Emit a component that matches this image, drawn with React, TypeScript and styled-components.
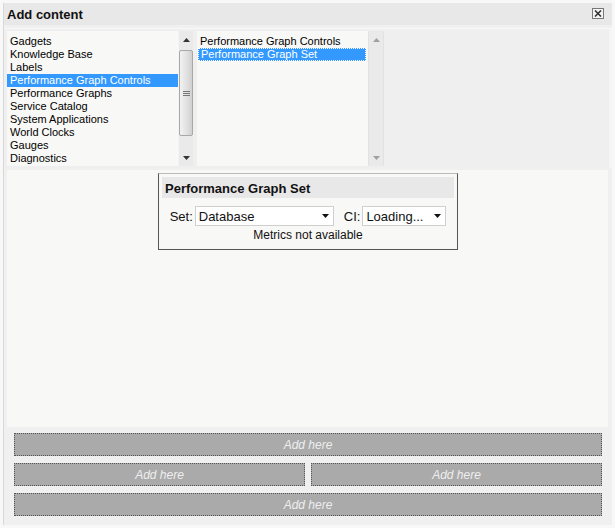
import React from "react";
import styled, { createGlobalStyle } from "styled-components";

const Global = createGlobalStyle`
  html, body { margin: 0; padding: 0; background: #f8f8f8; }
  body { font-family: "Liberation Sans", Arial, sans-serif; }
  * { box-sizing: border-box; }
`;

const Page = styled.div`
  width: 615px;
  height: 528px;
  padding: 3px 3px 3px 3px;
  background: #f8f8f8;
`;

const Frame = styled.div`
  height: 100%;
  background: #f0f0f0;
  border-left: 1px solid #d8d8d8;
  display: flex;
  flex-direction: column;
`;

const Header = styled.div`
  height: 22px;
  background: #e8e8e8;
  display: flex;
  align-items: center;
  justify-content: space-between;
  padding: 0 8px 0 3px;
`;

const Title = styled.div`
  font-weight: bold;
  font-size: 13px;
  color: #111;
`;

const CloseBtn = styled.div`
  width: 12px;
  height: 11px;
  border: 1px solid #777;
  background: #f4f4f4;
  display: flex;
  align-items: center;
  justify-content: center;
  margin-bottom: 2px;
`;

const Picker = styled.div`
  margin-top: 3px;
  border-top: 1px solid #f8f8f8;
  height: 140px;
  background: #efefef;
  display: flex;
  gap: 3px;
  padding: 2px 0 0 3px;
  border-right: 3px solid #f6f6f6;
`;

const ListBox = styled.div`
  width: 187px;
  height: 135px;
  display: flex;
  background: #f8f8f6;
`;

const Items = styled.div`
  flex: 1;
  padding-top: 4px;
`;

const Item = styled.div<{ $sel?: boolean; $focus?: boolean }>`
  height: 13px;
  line-height: 13px;
  font-size: 11px;
  font-family: "Liberation Sans", Tahoma, sans-serif;
  padding-left: 3px;
  white-space: nowrap;
  color: ${(p) => (p.$sel ? "#fff" : "#000")};
  background: ${(p) => (p.$sel ? "#3399ff" : "transparent")};
  outline: ${(p) => (p.$focus ? "1px dotted #fff" : "none")};
  outline-offset: -1px;
  margin-right: ${(p) => (p.$focus ? "2px" : "0")};
  margin-left: ${(p) => (p.$focus ? "1px" : "0")};
`;

const Scroll = styled.div<{ $disabled?: boolean }>`
  width: 16px;
  background: #eaeaea;
  display: flex;
  flex-direction: column;
  align-items: center;
  border-left: 1px solid ${(p) => (p.$disabled ? "#e2e2e2" : "#f4f4f4")};
  border-right: 1px solid ${(p) => (p.$disabled ? "#e2e2e2" : "#f0f0f0")};
`;

const Arrow = styled.div`
  height: 17px;
  display: flex;
  align-items: center;
  justify-content: center;
`;

const Track = styled.div`
  flex: 1;
  width: 100%;
  padding: 2px 0;
  display: flex;
  flex-direction: column;
`;

const Thumb = styled.div`
  height: 86px;
  width: 14px;
  border: 1px solid #a8a8a8;
  border-radius: 2px;
  background: linear-gradient(to right, #f2f2f2, #e0e0e0 60%, #d0d0d0);
  display: flex;
  flex-direction: column;
  align-items: center;
  justify-content: center;
  gap: 1px;
`;

const Grip = styled.div`
  width: 7px;
  height: 1px;
  background: #777;
`;

const Content = styled.div`
  margin: 2px 4px 0 3px;
  height: 257px;
  background: #f8f8f6;
  display: flex;
  justify-content: center;
  padding-top: 3px;
  padding-left: 1px;
`;

const Widget = styled.div`
  width: 300px;
  height: 77px;
  border: 1px solid #555;
  border-top-color: #bbb;
  padding: 3px;
  background: #f8f8f6;
`;

const WidgetHead = styled.div`
  height: 21px;
  background: #e8e8e8;
  display: flex;
  align-items: center;
  padding-left: 3px;
  padding-top: 1px;
  font-weight: bold;
  font-size: 13px;
  color: #111;
`;

const Row = styled.div`
  display: flex;
  align-items: center;
  justify-content: center;
  margin-top: 8px;
  font-size: 13px;
  color: #111;
`;

const Label = styled.span`
  margin-right: 2px;
`;

const Select = styled.div<{ $w: number; $gap?: number }>`
  width: ${(p) => p.$w}px;
  height: 20px;
  border: 1px solid #cfcfcf;
  background: #fff;
  display: flex;
  align-items: center;
  justify-content: space-between;
  padding: 0 4px 0 3px;
  font-size: 13px;
  margin-right: ${(p) => p.$gap ?? 0}px;
`;

const Note = styled.div`
  text-align: center;
  font-size: 12px;
  color: #111;
  margin-top: 2px;
`;

const Zones = styled.div`
  padding: 6px 10px 0 10px;
  display: flex;
  flex-direction: column;
  gap: 7px;
`;

const ZoneRow = styled.div`
  display: flex;
  gap: 6px;
`;

const Zone = styled.div`
  flex: 1;
  height: 23px;
  background: #aaaaaa;
  border: 1px dotted #555;
  display: flex;
  align-items: center;
  justify-content: center;
  font-style: italic;
  font-size: 12px;
  color: #eeeeee;
`;

const UpArrow = ({ c }: { c: string }) => (
  <svg width="7" height="4" viewBox="0 0 7 4">
    <path d="M3.5 0 L7 4 L0 4 Z" fill={c} />
  </svg>
);
const DownArrow = ({ c }: { c: string }) => (
  <svg width="7" height="4" viewBox="0 0 7 4">
    <path d="M0 0 L7 0 L3.5 4 Z" fill={c} />
  </svg>
);

const left = [
  "Gadgets",
  "Knowledge Base",
  "Labels",
  "Performance Graph Controls",
  "Performance Graphs",
  "Service Catalog",
  "System Applications",
  "World Clocks",
  "Gauges",
  "Diagnostics",
];

export default function App() {
  return (
    <>
      <Global />
      <Page>
        <Frame>
          <Header>
            <Title>Add content</Title>
            <CloseBtn>
              <svg width="8" height="7" viewBox="0 0 8 7">
                <path d="M1 0.5 L7 6.5 M7 0.5 L1 6.5" stroke="#333" strokeWidth="1.6" />
              </svg>
            </CloseBtn>
          </Header>
          <Picker>
            <ListBox>
              <Items>
                {left.map((t, i) => (
                  <Item key={t} $sel={i === 3}>
                    {t}
                  </Item>
                ))}
              </Items>
              <Scroll>
                <Arrow>
                  <UpArrow c="#333" />
                </Arrow>
                <Track>
                  <Thumb>
                    <Grip />
                    <Grip />
                    <Grip />
                  </Thumb>
                </Track>
                <Arrow>
                  <DownArrow c="#333" />
                </Arrow>
              </Scroll>
            </ListBox>
            <ListBox>
              <Items>
                <Item>Performance Graph Controls</Item>
                <Item $sel $focus>
                  Performance Graph Set
                </Item>
              </Items>
              <Scroll $disabled>
                <Arrow>
                  <UpArrow c="#a0a0a0" />
                </Arrow>
                <Track />
                <Arrow>
                  <DownArrow c="#a0a0a0" />
                </Arrow>
              </Scroll>
            </ListBox>
          </Picker>
          <Content>
            <Widget>
              <WidgetHead>Performance Graph Set</WidgetHead>
              <Row>
                <Label>Set:</Label>
                <Select $w={139} $gap={10}>
                  <span>Database</span>
                  <DownArrow c="#111" />
                </Select>
                <Label>CI:</Label>
                <Select $w={84}>
                  <span>Loading...</span>
                  <DownArrow c="#111" />
                </Select>
              </Row>
              <Note>Metrics not available</Note>
            </Widget>
          </Content>
          <Zones>
            <ZoneRow>
              <Zone>Add here</Zone>
            </ZoneRow>
            <ZoneRow>
              <Zone>Add here</Zone>
              <Zone>Add here</Zone>
            </ZoneRow>
            <ZoneRow>
              <Zone>Add here</Zone>
            </ZoneRow>
          </Zones>
        </Frame>
      </Page>
    </>
  );
}
